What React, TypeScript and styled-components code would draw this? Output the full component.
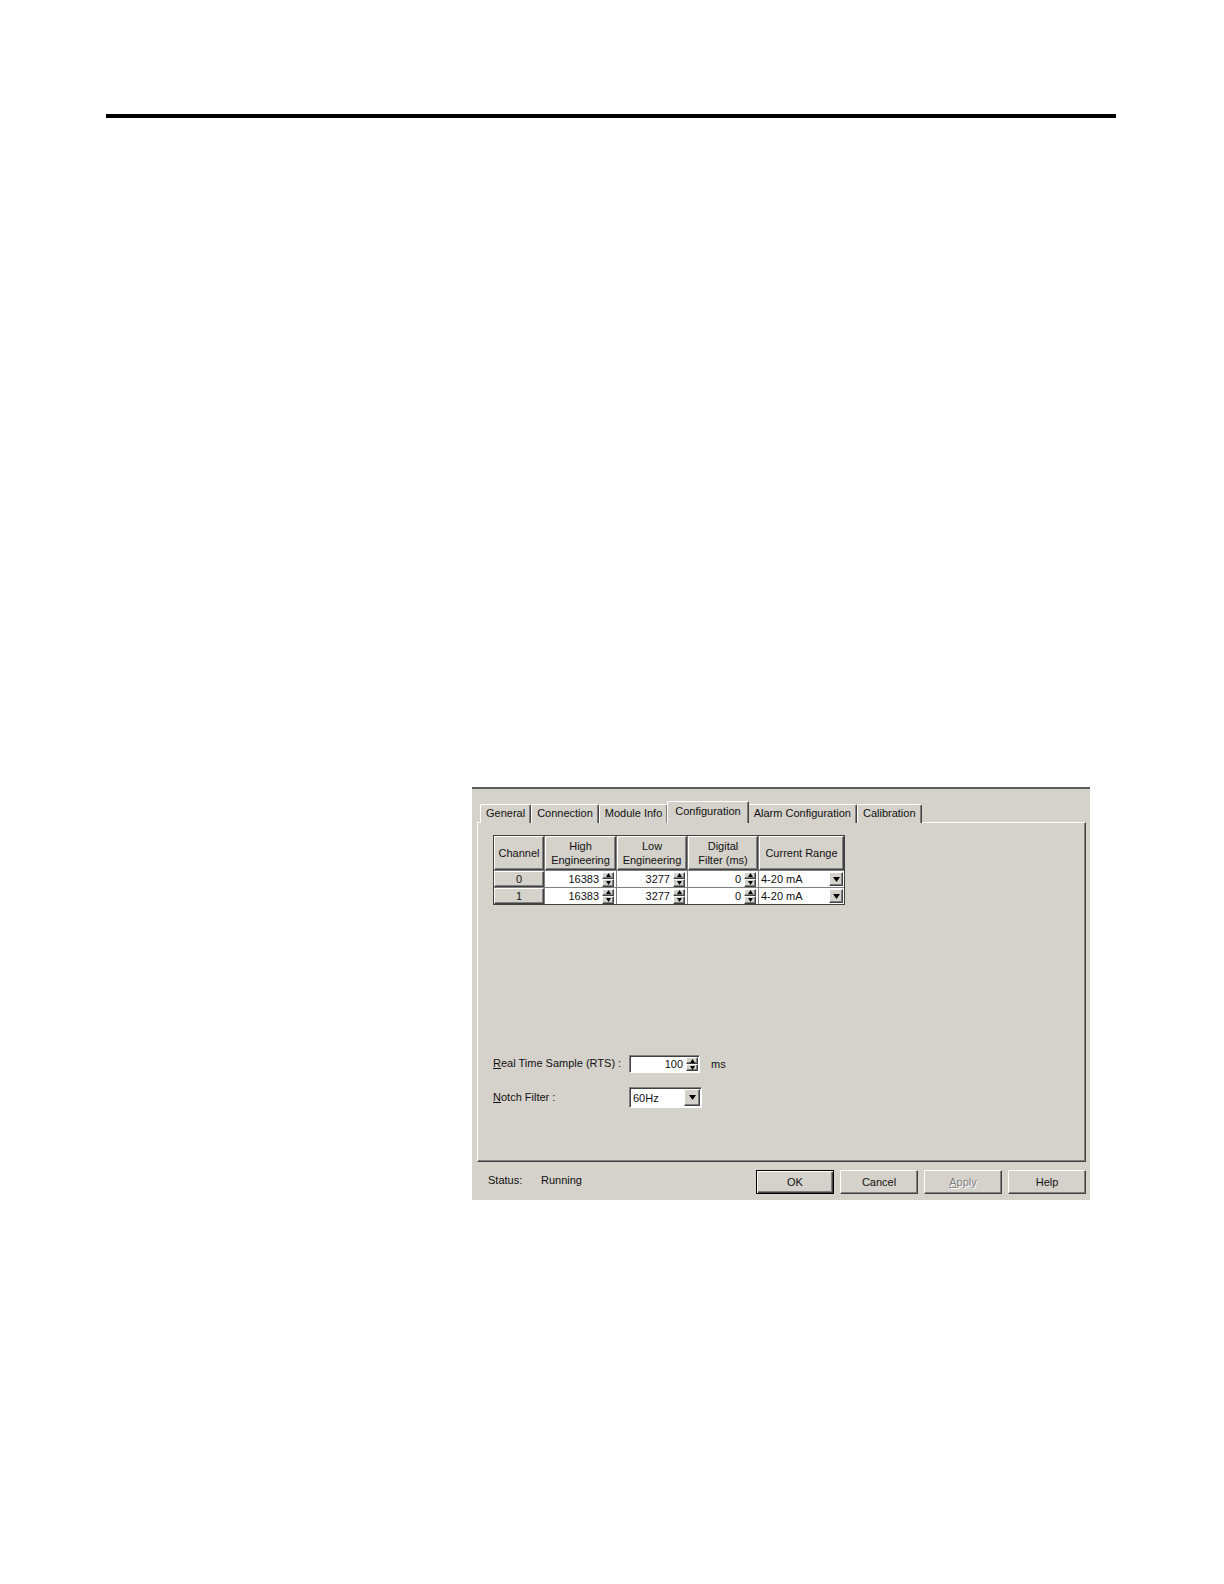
import React from "react";
import styled, { createGlobalStyle, css } from "styled-components";

const GlobalStyle = createGlobalStyle`
  html, body {
    margin: 0;
    padding: 0;
    background: #ffffff;
  }
`;

const FACE = "#d5d2cb";
const SHADOW = "#808080";
const DARK = "#404040";

const raised = css`
  border-top: 1px solid #ffffff;
  border-left: 1px solid #ffffff;
  border-right: 1px solid ${DARK};
  border-bottom: 1px solid ${DARK};
  box-shadow: inset -1px -1px 0 ${SHADOW};
`;

const sunken = css`
  border-top: 1px solid ${SHADOW};
  border-left: 1px solid ${SHADOW};
  border-right: 1px solid #ffffff;
  border-bottom: 1px solid #ffffff;
  box-shadow: inset 1px 1px 0 ${DARK};
`;

const Page = styled.div`
  width: 1224px;
  min-height: 1584px;
  padding-top: 114px;
  box-sizing: border-box;
`;

const Rule = styled.div`
  margin-left: 106px;
  width: 1010px;
  height: 4px;
  background: #000;
`;

const Dialog = styled.div`
  margin: 669px 0 0 472px;
  width: 618px;
  height: 413px;
  box-sizing: border-box;
  background: ${FACE};
  border-top: 2px solid #5b5b5b;
  padding: 12px 4px 0 5px;
  display: flex;
  flex-direction: column;
  font-family: "Liberation Sans", Arial, sans-serif;
  font-size: 11px;
  color: #111;
`;

const TabStrip = styled.div`
  display: flex;
  align-items: flex-end;
  height: 22px;
  padding-left: 3px;
  margin-bottom: -1px;
  position: relative;
  z-index: 1;
`;

const Tab = styled.div<{ $active?: boolean }>`
  box-sizing: border-box;
  height: ${(p) => (p.$active ? 22 : 19)}px;
  padding: ${(p) => (p.$active ? "3px 7px 0" : "0 5px 2px")};
  margin: ${(p) => (p.$active ? "0 -1px" : "0")};
  background: ${FACE};
  border-top: 1px solid #ffffff;
  border-left: 1px solid #ffffff;
  border-right: 1px solid ${DARK};
  box-shadow: inset -1px 0 0 ${SHADOW};
  display: flex;
  align-items: ${(p) => (p.$active ? "flex-start" : "center")};
  white-space: nowrap;
  border-radius: 2px 2px 0 0;
  position: relative;
  z-index: ${(p) => (p.$active ? 2 : 1)};
`;

const Panel = styled.div`
  box-sizing: border-box;
  width: 609px;
  height: 341px;
  background: ${FACE};
  ${raised};
  padding: 12px 0 0 15px;
  display: flex;
  flex-direction: column;
`;

const Grid = styled.div`
  display: grid;
  grid-template-columns: 50px 71px 70px 70px 85px;
  grid-auto-rows: 16px;
  grid-template-rows: 34px;
  gap: 1px;
  background: ${SHADOW};
  border: 1px solid ${DARK};
  width: max-content;
`;

const HeadCell = styled.div`
  box-sizing: border-box;
  background: ${FACE};
  ${raised};
  display: flex;
  align-items: center;
  justify-content: center;
  text-align: center;
  line-height: 14px;
`;

const ValueCell = styled.div<{ $align?: "left" | "right" }>`
  background: #ffffff;
  display: flex;
  align-items: center;
  justify-content: ${(p) => (p.$align === "left" ? "space-between" : "flex-end")};
  padding-left: 2px;
  box-sizing: border-box;
`;

const Value = styled.span`
  padding-right: 3px;
`;

const SpinBox = styled.div<{ $height: number; $flush?: boolean }>`
  display: flex;
  flex-direction: column;
  width: 12px;
  height: ${(p) => p.$height}px;
  margin-right: ${(p) => (p.$flush ? 0 : 2)}px;
`;

const SpinHalf = styled.div`
  flex: 1;
  box-sizing: border-box;
  background: ${FACE};
  ${raised};
  display: flex;
  align-items: center;
  justify-content: center;
`;

const DropButton = styled.div<{ $w: number; $h: number; $flush?: boolean }>`
  width: ${(p) => p.$w}px;
  height: ${(p) => p.$h}px;
  box-sizing: border-box;
  background: ${FACE};
  ${raised};
  display: flex;
  align-items: center;
  justify-content: center;
  margin-right: ${(p) => (p.$flush ? 0 : 1)}px;
`;

const FieldRow = styled.div<{ $top: number }>`
  display: flex;
  align-items: center;
  margin-top: ${(p) => p.$top}px;
`;

const Label = styled.div`
  width: 136px;
  white-space: nowrap;
  padding-bottom: 2px;
`;

const Edit = styled.div<{ $w: number; $h: number; $align?: "left" | "right" }>`
  box-sizing: border-box;
  width: ${(p) => p.$w}px;
  height: ${(p) => p.$h}px;
  background: #ffffff;
  ${sunken};
  display: flex;
  align-items: center;
  justify-content: ${(p) => (p.$align === "left" ? "space-between" : "flex-end")};
  padding: 1px 1px 1px 3px;
`;

const Unit = styled.span`
  margin-left: 11px;
`;

const Footer = styled.div`
  display: flex;
  align-items: center;
  height: 38px;
  padding-top: 2px;
  box-sizing: border-box;
`;

const StatusLabel = styled.span`
  margin-left: 11px;
  width: 53px;
  padding-bottom: 5px;
`;

const StatusValue = styled.span`
  flex: 1;
  padding-bottom: 5px;
`;

const Buttons = styled.div`
  display: flex;
  gap: 6px;
`;

const Button = styled.div<{ $default?: boolean; $disabled?: boolean }>`
  box-sizing: border-box;
  width: 78px;
  height: 24px;
  background: ${FACE};
  display: flex;
  align-items: center;
  justify-content: center;
  color: ${(p) => (p.$disabled ? SHADOW : "#111")};
  text-shadow: ${(p) => (p.$disabled ? "1px 1px 0 #ffffff" : "none")};
  ${(p) =>
    p.$default
      ? css`
          border: 1px solid #000;
          box-shadow: inset 1px 1px 0 #ffffff, inset -1px -1px 0 ${DARK},
            inset -2px -2px 0 ${SHADOW};
        `
      : css`
          ${raised};
        `}
`;

function Arrow({ dir, size = 5 }: { dir: "up" | "down"; size?: number }) {
  const h = Math.ceil(size / 2) + 1;
  const pts =
    dir === "up"
      ? `0,${h} ${size / 2},0 ${size},${h}`
      : `0,0 ${size / 2},${h} ${size},0`;
  return (
    <svg width={size} height={h} viewBox={`0 0 ${size} ${h}`}>
      <polygon points={pts} fill="#000" />
    </svg>
  );
}

function Spinner({ height, flush }: { height: number; flush?: boolean }) {
  return (
    <SpinBox $height={height} $flush={flush}>
      <SpinHalf>
        <Arrow dir="up" />
      </SpinHalf>
      <SpinHalf>
        <Arrow dir="down" />
      </SpinHalf>
    </SpinBox>
  );
}

const tabs = [
  "General",
  "Connection",
  "Module Info",
  "Configuration",
  "Alarm Configuration",
  "Calibration",
];

const channels = [
  { ch: "0", high: "16383", low: "3277", filter: "0", range: "4-20 mA" },
  { ch: "1", high: "16383", low: "3277", filter: "0", range: "4-20 mA" },
];

export default function App() {
  return (
    <>
      <GlobalStyle />
      <Page>
        <Rule />
        <Dialog>
          <TabStrip>
            {tabs.map((t) => (
              <Tab key={t} $active={t === "Configuration"}>
                {t}
              </Tab>
            ))}
          </TabStrip>
          <Panel>
            <Grid>
              <HeadCell>Channel</HeadCell>
              <HeadCell>
                High
                <br />
                Engineering
              </HeadCell>
              <HeadCell>
                Low
                <br />
                Engineering
              </HeadCell>
              <HeadCell>
                Digital
                <br />
                Filter (ms)
              </HeadCell>
              <HeadCell>Current Range</HeadCell>
              {channels.map((c) => (
                <React.Fragment key={c.ch}>
                  <HeadCell>{c.ch}</HeadCell>
                  <ValueCell>
                    <Value>{c.high}</Value>
                    <Spinner height={15} />
                  </ValueCell>
                  <ValueCell>
                    <Value>{c.low}</Value>
                    <Spinner height={15} />
                  </ValueCell>
                  <ValueCell>
                    <Value>{c.filter}</Value>
                    <Spinner height={15} />
                  </ValueCell>
                  <ValueCell $align="left">
                    <span>{c.range}</span>
                    <DropButton $w={14} $h={14}>
                      <Arrow dir="down" size={7} />
                    </DropButton>
                  </ValueCell>
                </React.Fragment>
              ))}
            </Grid>
            <FieldRow $top={150}>
              <Label>
                <u>R</u>eal Time Sample (RTS) :
              </Label>
              <Edit $w={71} $h={18}>
                <Value>100</Value>
                <Spinner height={14} flush />
              </Edit>
              <Unit>ms</Unit>
            </FieldRow>
            <FieldRow $top={14}>
              <Label>
                <u>N</u>otch Filter :
              </Label>
              <Edit $w={73} $h={21} $align="left">
                <span>60Hz</span>
                <DropButton $w={16} $h={17} $flush>
                  <Arrow dir="down" size={7} />
                </DropButton>
              </Edit>
            </FieldRow>
          </Panel>
          <Footer>
            <StatusLabel>Status:</StatusLabel>
            <StatusValue>Running</StatusValue>
            <Buttons>
              <Button $default>OK</Button>
              <Button>Cancel</Button>
              <Button $disabled>
                <u>A</u>pply
              </Button>
              <Button>Help</Button>
            </Buttons>
          </Footer>
        </Dialog>
      </Page>
    </>
  );
}
